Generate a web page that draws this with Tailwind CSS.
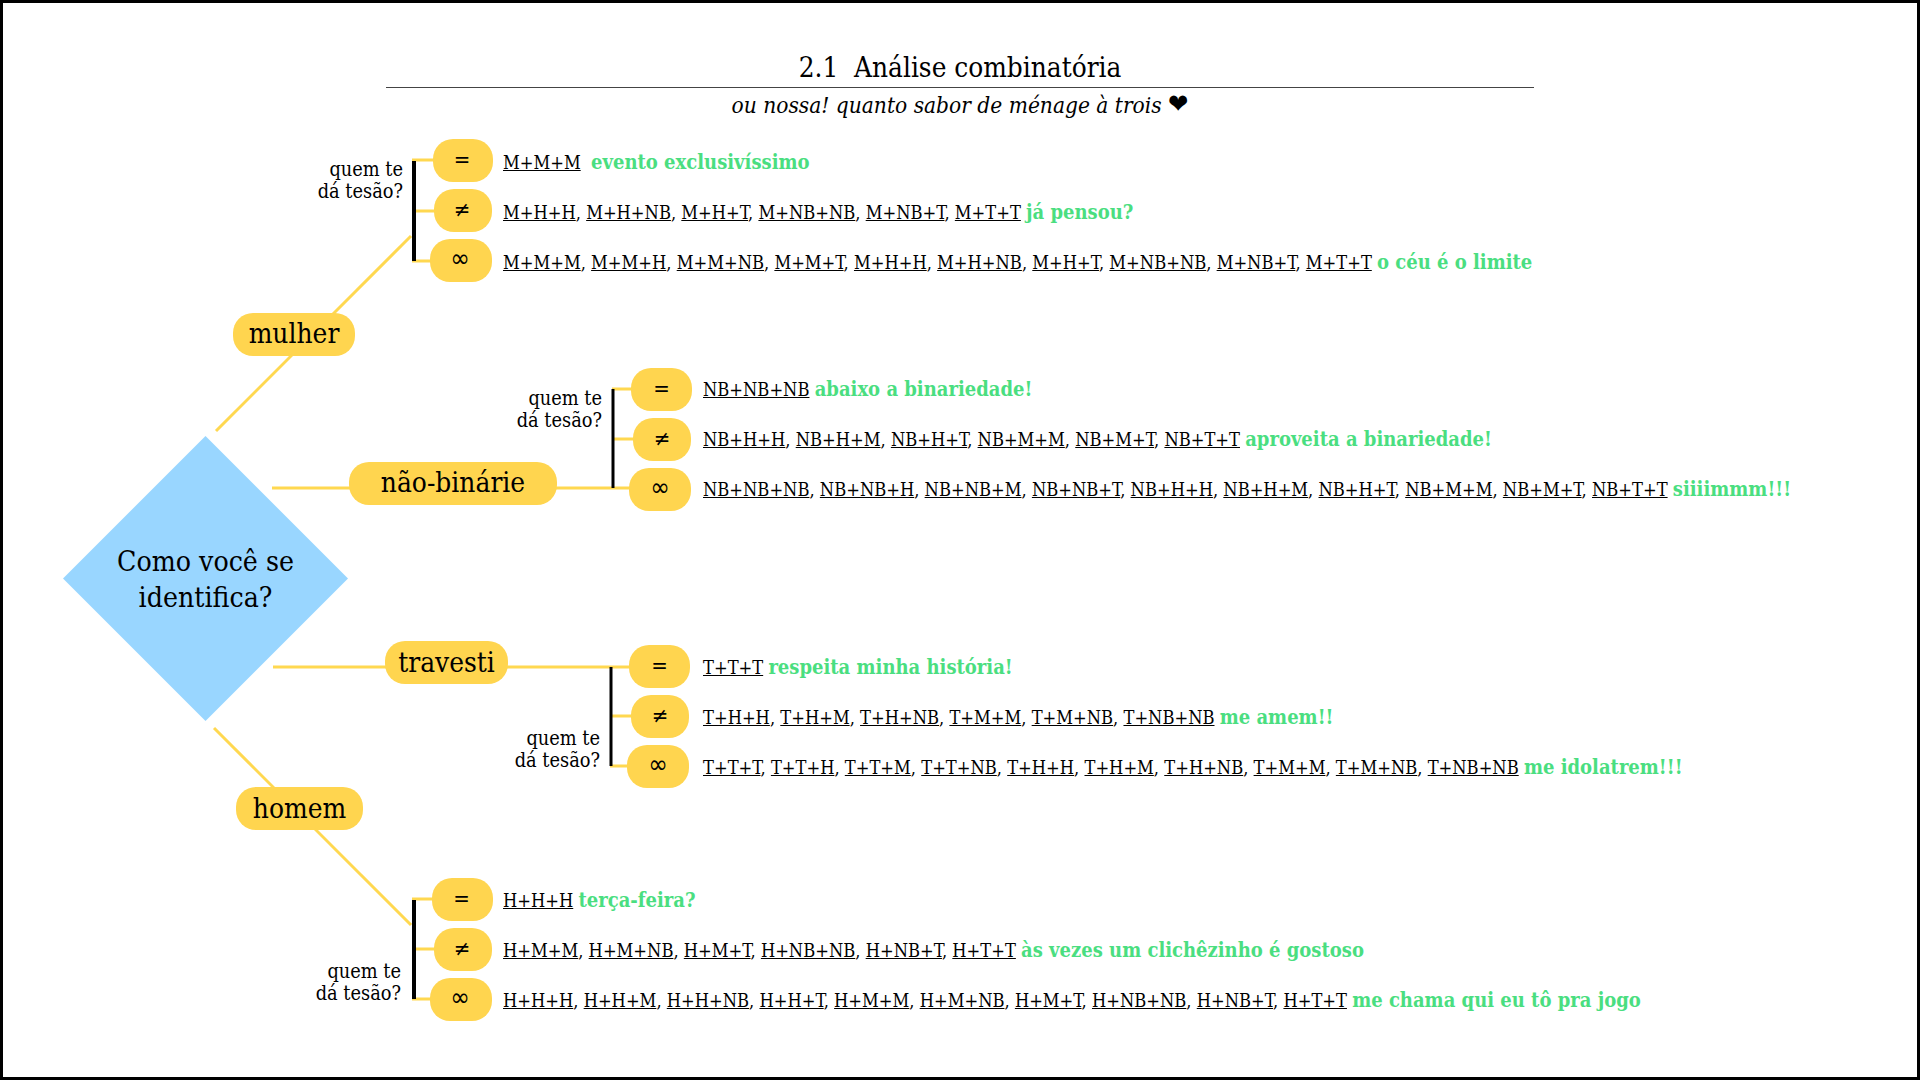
<!DOCTYPE html>
<html lang="pt">
<head>
<meta charset="UTF-8">
<title>Análise combinatória</title>
<script src="https://cdn.jsdelivr.net/npm/@tailwindcss/browser@4"></script>
</head>
<body class="bg-white">
<div class="relative w-[1920px] h-[1080px] overflow-hidden bg-white border-[3px] border-black text-black font-['DejaVu_Serif_Condensed','DejaVu_Serif',serif] font-stretch-condensed text-[18.2px]">

  <!-- cabecalho -->
  <div class="absolute left-[383px] top-[49px] w-[1148px]">
    <h1 class="text-center text-[27.7px] leading-[32px] h-[36px] border-b border-[#444]">2.1&nbsp; Análise combinatória</h1>
    <p class="mt-[2px] text-center text-[22.5px] leading-[30px] italic">ou nossa! quanto sabor de ménage à trois <span class="not-italic font-['DejaVu_Sans'] text-[27px] leading-[20px]">❤</span></p>
  </div>

  <!-- conexoes -->
  <svg class="absolute left-[-3px] top-[-3px]" width="1920" height="1080" fill="none">
    <g stroke="#ffd850" stroke-width="3">
      <path d="M216 431L411 236"/>
      <path d="M272 488H630"/>
      <path d="M273 667H630"/>
      <path d="M214 728L411 925"/>
      <path d="M412 160H435M412 211H435M412 261H435"/>
      <path d="M612 389H632M612 439H634"/>
      <path d="M610 716H632M610 766H630"/>
      <path d="M412 899H434M412 949H435M412 999H432"/>
    </g>
    <g stroke="#000">
      <path stroke-width="4" d="M414 161V261"/>
      <path stroke-width="3" d="M613 389V488"/>
      <path stroke-width="3" d="M611 667V766"/>
      <path stroke-width="4" d="M414 900V999"/>
    </g>
  </svg>

  <!-- pergunta -->
  <svg class="absolute left-[60px] top-[433px]" width="285" height="285"><polygon points="142.5,0 285,142.5 142.5,285 0,142.5" fill="#99d6ff"/></svg>
  <div class="absolute left-[60px] top-[541px] w-[285px] text-center text-[28.2px] leading-[36px]">Como você se<br>identifica?</div>

  <!-- identidades -->
  <div class="absolute left-[230px] top-[310px] w-[122px] h-[43px] pb-[2px] rounded-[20px] bg-[#ffd54f] flex items-center justify-center text-[27.8px]">mulher</div>
  <div class="absolute left-[346px] top-[459px] w-[208px] h-[43px] pb-[2px] rounded-[20px] bg-[#ffd54f] flex items-center justify-center text-[27.8px]">não-binárie</div>
  <div class="absolute left-[382px] top-[638px] w-[123px] h-[43px] rounded-[20px] bg-[#ffd54f] flex items-center justify-center text-[27.8px]">travesti</div>
  <div class="absolute left-[233px] top-[784px] w-[127px] h-[43px] rounded-[20px] bg-[#ffd54f] flex items-center justify-center text-[27.8px]">homem</div>

  <!-- quem te da tesao -->
  <div class="absolute left-[280px] top-[156px] w-[120px] text-right text-[19.8px] leading-[22px]">quem te<br>dá tesão?</div>
  <div class="absolute left-[479px] top-[385px] w-[120px] text-right text-[19.8px] leading-[22px]">quem te<br>dá tesão?</div>
  <div class="absolute left-[477px] top-[725px] w-[120px] text-right text-[19.8px] leading-[22px]">quem te<br>dá tesão?</div>
  <div class="absolute left-[278px] top-[958px] w-[120px] text-right text-[19.8px] leading-[22px]">quem te<br>dá tesão?</div>

  <!-- mulher -->
  <div class="absolute left-[427px] top-[136px] flex flex-col gap-[7px] whitespace-nowrap">
    <div class="flex items-center h-[43px]">
      <div class="ml-[3px] w-[60px] h-[43px] rounded-[20px] bg-[#ffd54f] flex items-center justify-center font-['DejaVu_Sans'] text-[22px] pb-[3px] pr-[2px]">=</div>
      <div class="ml-[10px] pt-[2px]"><u>M+M+M</u>&nbsp; <b class="text-[#4ade80] text-[20px]">evento exclusivíssimo</b></div>
    </div>
    <div class="flex items-center h-[43px]">
      <div class="ml-[4px] w-[58px] h-[43px] rounded-[20px] bg-[#ffd54f] flex items-center justify-center font-['DejaVu_Sans'] text-[22px] pb-[3px] pr-[2px]">≠</div>
      <div class="ml-[11px] pt-[2px]"><u>M+H+H</u>, <u>M+H+NB</u>, <u>M+H+T</u>, <u>M+NB+NB</u>, <u>M+NB+T</u>, <u>M+T+T</u> <b class="text-[#4ade80] text-[20px]">já pensou?</b></div>
    </div>
    <div class="flex items-center h-[43px]">
      <div class="w-[62px] h-[43px] rounded-[20px] bg-[#ffd54f] flex items-center justify-center font-['DejaVu_Sans'] text-[26px] pb-[4px] pr-[2px]">∞</div>
      <div class="ml-[11px] pt-[2px]"><u>M+M+M</u>, <u>M+M+H</u>, <u>M+M+NB</u>, <u>M+M+T</u>, <u>M+H+H</u>, <u>M+H+NB</u>, <u>M+H+T</u>, <u>M+NB+NB</u>, <u>M+NB+T</u>, <u>M+T+T</u> <b class="text-[#4ade80] text-[20px]">o céu é o limite</b></div>
    </div>
  </div>

  <!-- nao-binarie -->
  <div class="absolute left-[626px] top-[365px] flex flex-col gap-[7px] whitespace-nowrap">
    <div class="flex items-center h-[43px]">
      <div class="ml-[2px] w-[61px] h-[43px] rounded-[20px] bg-[#ffd54f] flex items-center justify-center font-['DejaVu_Sans'] text-[22px] pb-[3px]">=</div>
      <div class="ml-[11px] pb-[2px]"><u>NB+NB+NB</u> <b class="text-[#4ade80] text-[20px]">abaixo a binariedade!</b></div>
    </div>
    <div class="flex items-center h-[43px]">
      <div class="ml-[4px] w-[58px] h-[43px] rounded-[20px] bg-[#ffd54f] flex items-center justify-center font-['DejaVu_Sans'] text-[22px] pb-[3px]">≠</div>
      <div class="ml-[12px] pb-[2px]"><u>NB+H+H</u>, <u>NB+H+M</u>, <u>NB+H+T</u>, <u>NB+M+M</u>, <u>NB+M+T</u>, <u>NB+T+T</u> <b class="text-[#4ade80] text-[20px]">aproveita a binariedade!</b></div>
    </div>
    <div class="flex items-center h-[43px]">
      <div class="w-[62px] h-[43px] rounded-[20px] bg-[#ffd54f] flex items-center justify-center font-['DejaVu_Sans'] text-[26px] pb-[4px]">∞</div>
      <div class="ml-[12px] pb-[2px]"><u>NB+NB+NB</u>, <u>NB+NB+H</u>, <u>NB+NB+M</u>, <u>NB+NB+T</u>, <u>NB+H+H</u>, <u>NB+H+M</u>, <u>NB+H+T</u>, <u>NB+M+M</u>, <u>NB+M+T</u>, <u>NB+T+T</u> <b class="text-[#4ade80] text-[20px]">siiiimmm!!!</b></div>
    </div>
  </div>

  <!-- travesti -->
  <div class="absolute left-[624px] top-[642px] flex flex-col gap-[7px] whitespace-nowrap">
    <div class="flex items-center h-[43px]">
      <div class="ml-[2px] w-[61px] h-[43px] rounded-[20px] bg-[#ffd54f] flex items-center justify-center font-['DejaVu_Sans'] text-[22px] pb-[3px]">=</div>
      <div class="ml-[13px]"><u>T+T+T</u> <b class="text-[#4ade80] text-[20px]">respeita minha história!</b></div>
    </div>
    <div class="flex items-center h-[43px]">
      <div class="ml-[4px] w-[58px] h-[43px] rounded-[20px] bg-[#ffd54f] flex items-center justify-center font-['DejaVu_Sans'] text-[22px] pb-[3px]">≠</div>
      <div class="ml-[14px]"><u>T+H+H</u>, <u>T+H+M</u>, <u>T+H+NB</u>, <u>T+M+M</u>, <u>T+M+NB</u>, <u>T+NB+NB</u> <b class="text-[#4ade80] text-[20px]">me amem!!</b></div>
    </div>
    <div class="flex items-center h-[43px]">
      <div class="w-[62px] h-[43px] rounded-[20px] bg-[#ffd54f] flex items-center justify-center font-['DejaVu_Sans'] text-[26px] pb-[4px]">∞</div>
      <div class="ml-[14px]"><u>T+T+T</u>, <u>T+T+H</u>, <u>T+T+M</u>, <u>T+T+NB</u>, <u>T+H+H</u>, <u>T+H+M</u>, <u>T+H+NB</u>, <u>T+M+M</u>, <u>T+M+NB</u>, <u>T+NB+NB</u> <b class="text-[#4ade80] text-[20px]">me idolatrem!!!</b></div>
    </div>
  </div>

  <!-- homem -->
  <div class="absolute left-[427px] top-[875px] flex flex-col gap-[7px] whitespace-nowrap">
    <div class="flex items-center h-[43px]">
      <div class="ml-[2px] w-[61px] h-[43px] rounded-[20px] bg-[#ffd54f] flex items-center justify-center font-['DejaVu_Sans'] text-[22px] pb-[3px] pr-[2px]">=</div>
      <div class="ml-[10px]"><u>H+H+H</u> <b class="text-[#4ade80] text-[20px]">terça-feira?</b></div>
    </div>
    <div class="flex items-center h-[43px]">
      <div class="ml-[4px] w-[58px] h-[43px] rounded-[20px] bg-[#ffd54f] flex items-center justify-center font-['DejaVu_Sans'] text-[22px] pb-[3px] pr-[2px]">≠</div>
      <div class="ml-[11px]"><u>H+M+M</u>, <u>H+M+NB</u>, <u>H+M+T</u>, <u>H+NB+NB</u>, <u>H+NB+T</u>, <u>H+T+T</u> <b class="text-[#4ade80] text-[20px]">às vezes um clichêzinho é gostoso</b></div>
    </div>
    <div class="flex items-center h-[43px]">
      <div class="w-[62px] h-[43px] rounded-[20px] bg-[#ffd54f] flex items-center justify-center font-['DejaVu_Sans'] text-[26px] pb-[4px] pr-[2px]">∞</div>
      <div class="ml-[11px]"><u>H+H+H</u>, <u>H+H+M</u>, <u>H+H+NB</u>, <u>H+H+T</u>, <u>H+M+M</u>, <u>H+M+NB</u>, <u>H+M+T</u>, <u>H+NB+NB</u>, <u>H+NB+T</u>, <u>H+T+T</u> <b class="text-[#4ade80] text-[20px]">me chama qui eu tô pra jogo</b></div>
    </div>
  </div>

</div>
</body>
</html>
